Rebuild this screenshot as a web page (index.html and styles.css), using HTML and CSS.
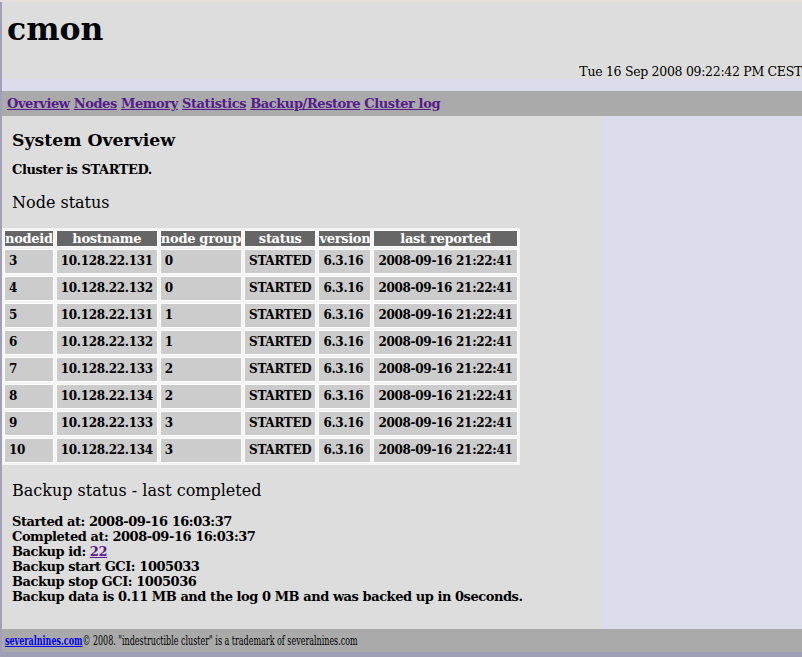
FILE: index.html
```
<!DOCTYPE html>
<html lang="en">
<head>
	<meta charset="UTF-8">
	<title>cmon - System Overview</title>
	<link rel="stylesheet" href="styles.css">
</head>
<body>
	<div class="header">
		<h1>cmon</h1>
		<div class="date">Tue 16 Sep 2008 09:22:42 PM CEST</div>
	</div>
	<div class="menu">
		<a href="#">Overview</a> <a href="#">Nodes</a> <a href="#">Memory</a> <a href="#">Statistics</a> <a href="#">Backup/Restore</a> <a href="#">Cluster log</a>
	</div>
	<div class="main">
		<div class="content">
			<h2>System Overview</h2>
			<p class="cluster">Cluster is STARTED.</p>
			<h3>Node status</h3>
			<table class="nodes">
				<tr><th>nodeid</th><th>hostname</th><th>node group</th><th>status</th><th>version</th><th>last reported</th></tr>
				<tr><td>3</td><td>10.128.22.131</td><td>0</td><td>STARTED</td><td>6.3.16</td><td>2008-09-16 21:22:41</td></tr>
				<tr><td>4</td><td>10.128.22.132</td><td>0</td><td>STARTED</td><td>6.3.16</td><td>2008-09-16 21:22:41</td></tr>
				<tr><td>5</td><td>10.128.22.131</td><td>1</td><td>STARTED</td><td>6.3.16</td><td>2008-09-16 21:22:41</td></tr>
				<tr><td>6</td><td>10.128.22.132</td><td>1</td><td>STARTED</td><td>6.3.16</td><td>2008-09-16 21:22:41</td></tr>
				<tr><td>7</td><td>10.128.22.133</td><td>2</td><td>STARTED</td><td>6.3.16</td><td>2008-09-16 21:22:41</td></tr>
				<tr><td>8</td><td>10.128.22.134</td><td>2</td><td>STARTED</td><td>6.3.16</td><td>2008-09-16 21:22:41</td></tr>
				<tr><td>9</td><td>10.128.22.133</td><td>3</td><td>STARTED</td><td>6.3.16</td><td>2008-09-16 21:22:41</td></tr>
				<tr><td>10</td><td>10.128.22.134</td><td>3</td><td>STARTED</td><td>6.3.16</td><td>2008-09-16 21:22:41</td></tr>
			</table>
			<h3 class="backup-title">Backup status - last completed</h3>
			<p class="backup">
				Started at: 2008-09-16 16:03:37<br>
				Completed at: 2008-09-16 16:03:37<br>
				Backup id: <a href="#">22</a><br>
				Backup start GCI: 1005033<br>
				Backup stop GCI: 1005036<br>
				Backup data is 0.11 MB and the log 0 MB and was backed up in 0seconds.
			</p>
		</div>
		<div class="side"></div>
	</div>
	<div class="footer">
		<span class="narrow"><a href="#">severalnines.com</a>&copy; 2008. "indestructible cluster"  is a trademark of severalnines.com</span>
	</div>
</body>
</html>
```
FILE: styles.css
```
html{border-top:2px solid #e6e0da;background-color:#dcdcec;}
body{margin:0;border-left:2px solid #a29fb8;background-color:#dcdcec;font-family:"DejaVu Serif",serif;font-size:13px;letter-spacing:-0.45px;color:#000;}
a{color:#551a8b;}

/* header */
.header{background-color:#dddddd;height:77px;padding:8px 0 0 5px;box-sizing:border-box;margin-bottom:12px;}
.header h1{margin:0;font-size:31.5px;font-weight:bold;line-height:37px;letter-spacing:0;}
.date{text-align:right;margin-top:17px;font-size:12.5px;letter-spacing:-0.3px;line-height:15px;}

/* menu */
.menu{background-color:#aaaaaa;height:25px;line-height:26px;padding-left:5px;font-weight:bold;letter-spacing:-0.42px;}

/* main */
.main{display:flex;height:513px;}
.content{width:600px;background-color:#dddddd;overflow:hidden;}
.side{flex:1;}
.content h2{font-size:17.3px;letter-spacing:0;margin:14px 0 0 10px;line-height:20px;}
.cluster{font-weight:bold;margin:12px 0 0 10px;line-height:15px;}
.content h3{font-size:16px;letter-spacing:0;font-weight:normal;margin:16px 0 0 10px;line-height:19px;}

.nodes{margin-top:16px;border-spacing:2px;background-color:#f4f4f4;font-weight:bold;}
.nodes th{background-color:#666666;color:#fff;padding:0;font-size:13px;letter-spacing:-0.3px;line-height:15px;border:1px solid #fff;white-space:nowrap;}
.nodes td{background-color:#cccccc;padding:4px;font-size:12px;letter-spacing:-0.3px;line-height:15px;border:1px solid #fff;white-space:nowrap;}

.content h3.backup-title{margin-top:16px;}
.backup{font-weight:bold;margin:14px 0 0 10px;line-height:15px;}

/* footer */
.footer{background-color:#aaaaaa;height:23px;line-height:24px;padding-left:3px;font-size:12px;letter-spacing:0;border-bottom:5px solid #a09eb4;white-space:nowrap;}
.footer .narrow{display:inline-block;transform:scaleX(0.666);transform-origin:0 50%;}
.footer a{color:#0000ee;font-weight:bold;}
```
